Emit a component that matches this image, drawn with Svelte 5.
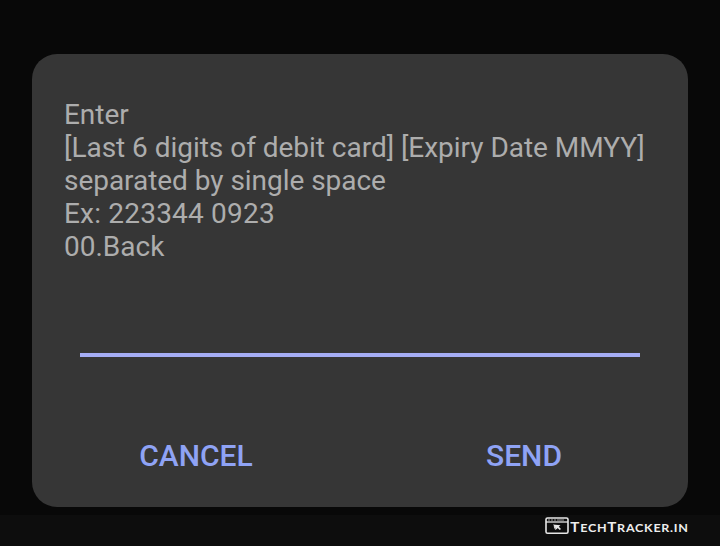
<script>
  const lines = [
    { text: 'Enter', spacing: -0.04 },
    { text: '[Last 6 digits of debit card] [Expiry Date MMYY]', spacing: -0.03 },
    { text: 'separated by single space', spacing: -0.04 },
    { text: 'Ex: 223344 0923', spacing: 0.2 },
    { text: '00.Back', spacing: 0 }
  ];
  let value = $state('');
</script>

<div class="screen">
  <main class="dialog">
    <div class="message">
      {#each lines as line}
        <div style:letter-spacing="{line.spacing}px">{line.text}</div>
      {/each}
    </div>
    <input class="entry" aria-label="Reply" bind:value />
    <div class="actions">
      <button type="button">CANCEL</button>
      <button type="button">SEND</button>
    </div>
  </main>
  <footer>
    <svg width="25" height="18" viewBox="0 0 25 18" aria-hidden="true">
      <rect x="1" y="1" width="22" height="15.3" rx="1.5" fill="none" stroke="#e6e6e6" stroke-width="1.6" />
      <path d="M1 5H23" stroke="#e6e6e6" stroke-width="1.3" />
      <path d="M3 3H5M6 3H8M9 3H11M12 3H19" stroke="#999" stroke-width="1" />
      <path d="M8 7.6L15.5 8.3L13.8 9.8L16 12L14.8 13L12.6 11L11.5 12.6Z" fill="#e6e6e6" />
      <path d="M9.2 9.3L10.6 12.6" stroke="#e6e6e6" stroke-width="1.1" />
    </svg>
    <span class="brand">T<small>ECH</small>T<small>RACKER.IN</small></span>
  </footer>
</div>

<style>
  :global(body) {
    margin: 0;
    background: #080808;
  }
  .screen {
    box-sizing: border-box;
    width: 720px;
    height: 546px;
    padding-top: 54px;
    display: flex;
    flex-direction: column;
    background: #080808;
    font-family: Roboto, sans-serif;
    overflow: hidden;
  }
  .dialog {
    box-sizing: border-box;
    flex: none;
    height: 453px;
    margin: 0 32px;
    padding: 44px 32px 0;
    display: flex;
    flex-direction: column;
    border-radius: 25px;
    background: #363636;
  }
  .message {
    color: #adadad;
    font-size: 28px;
    line-height: 33px;
    white-space: nowrap;
  }
  .entry {
    box-sizing: border-box;
    height: 64px;
    margin: 30px 16px 0;
    padding: 0 0 8px;
    border: 0;
    border-bottom: 4px solid #a5adf5;
    border-radius: 0;
    outline: 0;
    background: transparent;
    color: #ddd;
    font: 28px Roboto, sans-serif;
  }
  .actions {
    display: flex;
    margin: 63px -32px 0;
  }
  button {
    flex: 1;
    height: 72px;
    padding: 0;
    border: 0;
    background: none;
    color: #8fa3f5;
    font: 500 30px/72px Roboto, sans-serif;
  }
  footer {
    flex: none;
    box-sizing: border-box;
    height: 31px;
    margin-top: 8px;
    padding: 2px 31px 0 0;
    display: flex;
    justify-content: flex-end;
    align-items: flex-start;
    background: #0d0d0d;
  }
  .brand {
    margin-left: 13px;
    color: #ededed;
    font: 700 13.5px/20px Lato, sans-serif;
    letter-spacing: 0.65px;
    transform: scaleX(1.12);
    transform-origin: right;
  }
  .brand small {
    font-size: 11.2px;
  }
</style>
